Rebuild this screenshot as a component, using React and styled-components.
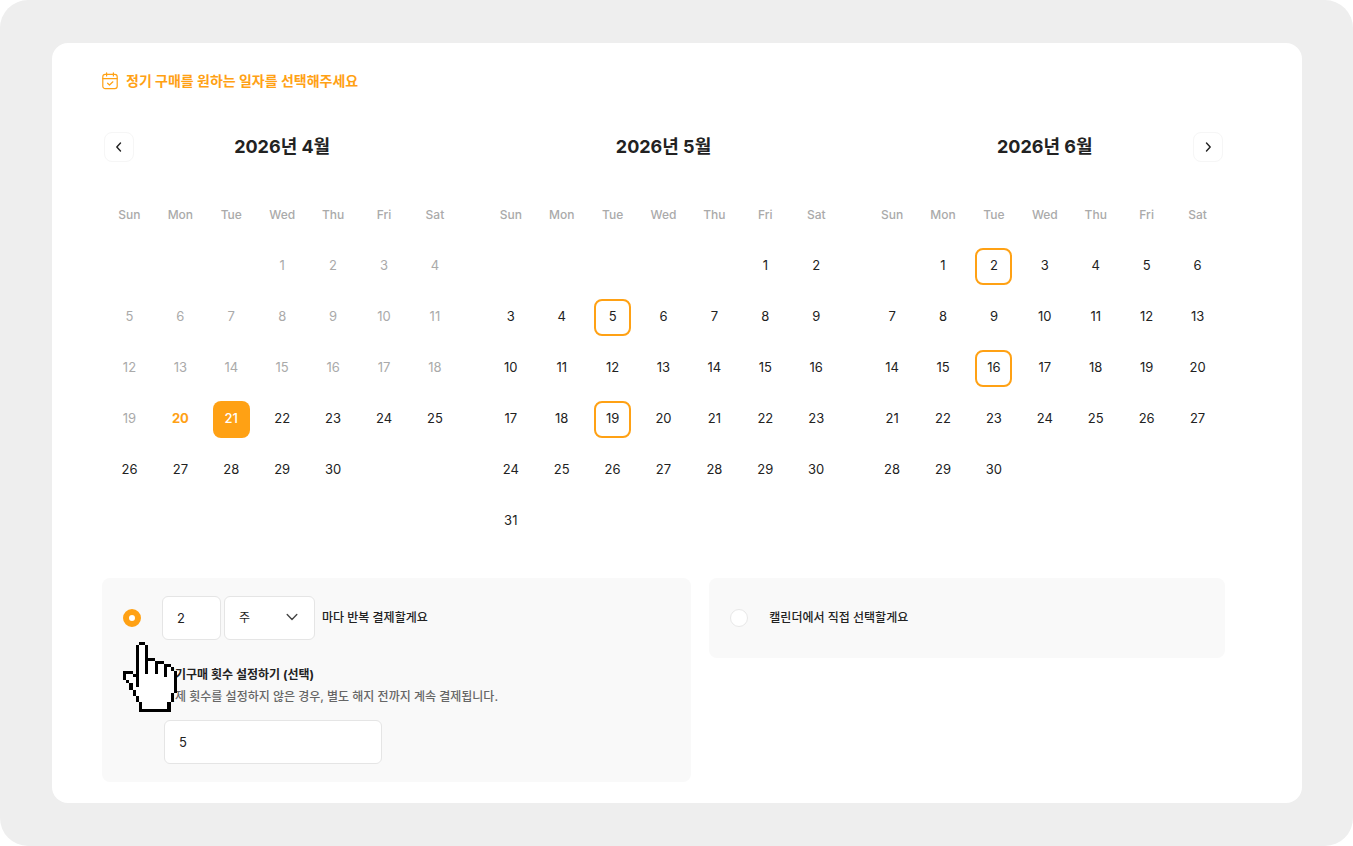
import React, { useState } from "react";
import styled, { createGlobalStyle, css } from "styled-components";

const ORANGE = "#ffa114";
const INK = "#222222";

const GlobalStyle = createGlobalStyle`
  *, *::before, *::after { box-sizing: border-box; }
  body {
    margin: 0;
    background: #ffffff;
    color: ${INK};
    font-family: Inter, "Noto Sans CJK KR", sans-serif;
    font-size: 13px;
    line-height: 20px;
  }
  button, input, select { font: inherit; color: inherit; }
`;

const Page = styled.main`
  min-height: 100vh;
  padding: 43px 51px 43px 52px;
  border-radius: 28px;
  background: #eeeeee;
`;

const Card = styled.section`
  padding: 28px 77px 21px 50px;
  border-radius: 16px;
  background: #ffffff;
`;

const Title = styled.h1`
  display: flex;
  align-items: center;
  gap: 8px;
  margin: 0;
  color: ${ORANGE};
  font-size: 14px;
  font-weight: 700;
  line-height: 20px;
`;

const Months = styled.div`
  display: grid;
  grid-template-columns: repeat(3, 1fr);
  gap: 25px;
  margin-top: 41px;
  padding: 0 2px;
`;

const MonthHead = styled.div`
  display: grid;
  grid-template-columns: 30px 1fr 30px;
  align-items: center;
  height: 30px;
`;

const MonthName = styled.h2`
  grid-column: 2;
  margin: 0;
  text-align: center;
  font-size: 18px;
  font-weight: 700;
  line-height: 24px;
`;

const NavButton = styled.button`
  display: grid;
  place-items: center;
  width: 30px;
  height: 30px;
  padding: 0;
  border: 1px solid #f6f6f6;
  border-radius: 8px;
  background: #ffffff;
  cursor: pointer;
`;

const Calendar = styled.table`
  display: block;
  margin-top: 28px;

  thead, tbody { display: block; }
  tr { display: grid; grid-template-columns: repeat(7, 1fr); }
  th, td {
    display: grid;
    place-items: center;
    aspect-ratio: 1;
    padding: 0;
  }
  th { color: #aaaaaa; font-size: 12px; font-weight: 500; }
`;

const kinds = {
  past: css`color: #aaaaaa;`,
  today: css`color: ${ORANGE}; font-weight: 700;`,
  start: css`background: ${ORANGE}; color: #ffffff; font-weight: 500;`,
  repeat: css`border-color: ${ORANGE};`,
  normal: css`color: ${INK};`,
};

const Day = styled.button`
  width: 37px;
  height: 37px;
  padding: 0 0 2px;
  border: 2px solid transparent;
  border-radius: 8px;
  background: transparent;
  font-weight: 400;
  text-align: center;
  cursor: pointer;
  ${({ $kind }) => kinds[$kind]}
`;

const Options = styled.div`
  display: grid;
  grid-template-columns: 8fr 7fr;
  align-items: start;
  gap: 18px;
  margin-top: 32px;
`;

const Option = styled.div`
  position: relative;
  padding: 18px 20px;
  border-radius: 8px;
  background: #f9f9f9;
`;

const OptionRow = styled.div`
  display: flex;
  align-items: center;
  min-height: 44px;
`;

const Radio = styled.input`
  appearance: none;
  flex: none;
  width: 18px;
  height: 18px;
  margin: 0 21px 0 1px;
  border: 1px solid #e8e8e8;
  border-radius: 50%;
  background: #ffffff;

  &:checked { border: 6px solid ${ORANGE}; }
`;

const OptionText = styled.label`
  font-size: 12px;
  font-weight: 500;
  margin-left: ${({ $gap }) => $gap}px;
`;

const field = css`
  height: 44px;
  border: 1px solid #e5e5e5;
  border-radius: 6px;
  background: #ffffff;
  outline: none;
`;

const TextField = styled.input`
  ${field}
  display: block;
  width: ${({ $width }) => $width}px;
  padding: 0 14px;
`;

const SelectWrap = styled.span`
  position: relative;
  display: block;
  margin-left: 3px;
`;

const Select = styled.select`
  ${field}
  appearance: none;
  display: block;
  width: 91px;
  padding: 0 14px;
  font-size: 12px;
`;

const SelectArrow = styled.svg`
  position: absolute;
  top: 16px;
  right: 17px;
  pointer-events: none;
`;

const Count = styled.div`
  display: flex;
  flex-direction: column;
  margin: 25px 0 0 42px;
`;

const CountLabel = styled.label`
  font-size: 12px;
  font-weight: 700;
  line-height: 20px;
`;

const CountHint = styled.p`
  margin: 2px 0 13px;
  color: #666666;
  font-size: 12px;
  font-weight: 500;
  line-height: 20px;
`;

const Hand = styled.svg`
  position: absolute;
  top: 64px;
  left: 21px;
  pointer-events: none;
`;

const WEEKDAYS = ["Sun", "Mon", "Tue", "Wed", "Thu", "Fri", "Sat"];

const MONTHS = [
  { name: "2026년 4월", offset: 3, days: 30, kind: (d) => (d < 20 ? "past" : d === 20 ? "today" : d === 21 ? "start" : "normal") },
  { name: "2026년 5월", offset: 5, days: 31, kind: (d) => (d === 5 || d === 19 ? "repeat" : "normal") },
  { name: "2026년 6월", offset: 1, days: 30, kind: (d) => (d === 2 || d === 16 ? "repeat" : "normal") },
];

function weeksOf({ offset, days }) {
  const rows = Math.ceil((offset + days) / 7);
  return Array.from({ length: rows }, (_, r) =>
    Array.from({ length: 7 }, (_, c) => {
      const day = r * 7 + c - offset + 1;
      return day > 0 && day <= days ? day : null;
    })
  );
}

function Chevron({ d }) {
  return (
    <svg width="14" height="14" viewBox="0 0 14 14" fill="none" stroke={INK} strokeWidth="1.4" strokeLinecap="round" strokeLinejoin="round" aria-hidden="true">
      <path d={d} />
    </svg>
  );
}

function CalendarIcon() {
  return (
    <svg width="16" height="18" viewBox="0 0 16 18" fill="none" stroke={ORANGE} strokeWidth="1.2" strokeLinecap="round" strokeLinejoin="round" aria-hidden="true">
      <rect x="0.8" y="2.4" width="14.4" height="14.2" rx="2.4" />
      <path d="M0.8 6.6h14.4M4.6 0.8v3.2M11.4 0.8v3.2M5.6 11.2l1.9 1.8 3.4-3.2" />
    </svg>
  );
}

function HandPointer() {
  return (
    <Hand width="54" height="70" viewBox="0 0 17 22" shapeRendering="crispEdges" aria-hidden="true">
      <path fill="#ffffff" d="M5 1H7V6H10V7H13V8H15V9H16V16H15V19H14V21H6V19H5V17H4V15H3V13H2V12H1V10H3V11H4V13H5Z" />
      <path
        fill="#000000"
        d="M5 0h2v1H5zM4 1h1v13H4zM7 1h1v9H7zM8 5h2v1H8zM10 6h3v1H10zM10 7h1v3H10zM13 7h2v1H13zM13 8h1v3H13zM15 8h1v1H15zM16 9h1v7H16zM15 16h1v3H15zM14 19h1v3H14zM5 21h9v1H5zM5 19h1v2H5zM4 17h1v2H4zM3 15h1v2H3zM2 13h1v2H2zM1 12h1v1H1zM0 9h1v3H0zM1 9h2v1H1zM3 10h1v1H3z"
      />
    </Hand>
  );
}

function Month({ month, prev, next }) {
  return (
    <section>
      <MonthHead>
        {prev && (
          <NavButton type="button" aria-label="이전 달">
            <Chevron d="M8.5 3 4.8 7l3.7 4" />
          </NavButton>
        )}
        <MonthName>{month.name}</MonthName>
        {next && (
          <NavButton type="button" aria-label="다음 달">
            <Chevron d="M5.5 3 9.2 7l-3.7 4" />
          </NavButton>
        )}
      </MonthHead>
      <Calendar>
        <thead>
          <tr>
            {WEEKDAYS.map((w) => (
              <th key={w} scope="col">{w}</th>
            ))}
          </tr>
        </thead>
        <tbody>
          {weeksOf(month).map((week, r) => (
            <tr key={r}>
              {week.map((day, c) => (
                <td key={c}>{day && <Day type="button" $kind={month.kind(day)}>{day}</Day>}</td>
              ))}
            </tr>
          ))}
        </tbody>
      </Calendar>
    </section>
  );
}

export default function App() {
  const [mode, setMode] = useState("repeat");
  const [every, setEvery] = useState("2");
  const [count, setCount] = useState("5");

  return (
    <>
      <GlobalStyle />
      <Page>
        <Card>
          <Title>
            <CalendarIcon />
            정기 구매를 원하는 일자를 선택해주세요
          </Title>
          <Months>
            {MONTHS.map((m, i) => (
              <Month key={m.name} month={m} prev={i === 0} next={i === MONTHS.length - 1} />
            ))}
          </Months>
          <Options>
            <Option>
              <OptionRow>
                <Radio id="mode-repeat" type="radio" name="mode" checked={mode === "repeat"} onChange={() => setMode("repeat")} />
                <TextField $width={59} aria-label="반복 간격" value={every} onChange={(e) => setEvery(e.target.value)} />
                <SelectWrap>
                  <Select aria-label="반복 단위" defaultValue="week">
                    <option value="week">주</option>
                    <option value="month">개월</option>
                  </Select>
                  <SelectArrow width="12" height="10" viewBox="0 0 12 10" fill="none" stroke="#444444" strokeWidth="1.4" strokeLinecap="round" strokeLinejoin="round" aria-hidden="true">
                    <path d="M1.2 2.6 6 7.4l4.8-4.8" />
                  </SelectArrow>
                </SelectWrap>
                <OptionText htmlFor="mode-repeat" $gap={7}>마다 반복 결제할게요</OptionText>
              </OptionRow>
              <Count>
                <CountLabel htmlFor="count">정기구매 횟수 설정하기 (선택)</CountLabel>
                <CountHint>결제 횟수를 설정하지 않은 경우, 별도 해지 전까지 계속 결제됩니다.</CountHint>
                <TextField id="count" $width={218} value={count} onChange={(e) => setCount(e.target.value)} />
              </Count>
              <HandPointer />
            </Option>
            <Option>
              <OptionRow>
                <Radio id="mode-direct" type="radio" name="mode" checked={mode === "direct"} onChange={() => setMode("direct")} />
                <OptionText htmlFor="mode-direct" $gap={0}>캘린더에서 직접 선택할게요</OptionText>
              </OptionRow>
            </Option>
          </Options>
        </Card>
      </Page>
    </>
  );
}
